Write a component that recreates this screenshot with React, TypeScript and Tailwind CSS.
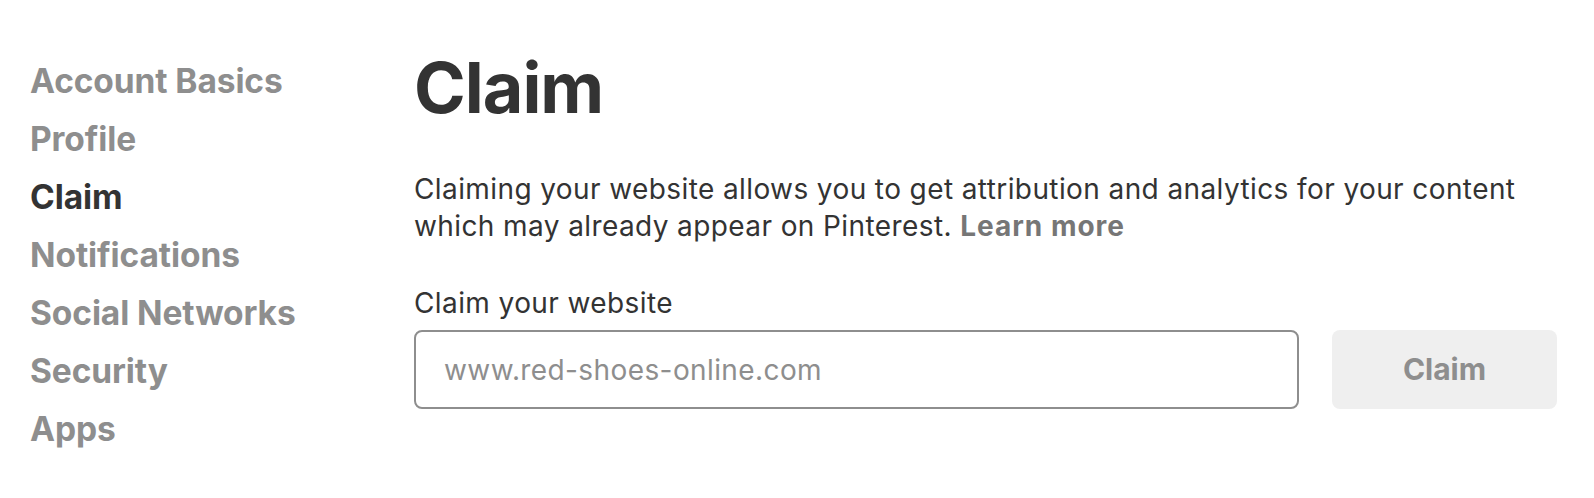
import React from "react"

const navItems = [
  "Account Basics",
  "Profile",
  "Claim",
  "Notifications",
  "Social Networks",
  "Security",
  "Apps",
]

export default function App() {
  return (
    <div className="flex min-h-[498px] w-full bg-white font-['Inter',sans-serif] text-[#333333]">
      {/* Settings nav */}
      <nav className="w-[414px] shrink-0 pl-[30px] pt-[52px]">
        <ul className="flex flex-col">
          {navItems.map((item) => (
            <li
              key={item}
              className={
                "text-[33.5px] font-bold leading-[58px] tracking-[-0.1px] " +
                (item === "Claim" ? "text-[#333333]" : "text-[#8e8e8e]")
              }
            >
              {item}
            </li>
          ))}
        </ul>
      </nav>

      {/* Main panel */}
      <main className="flex-1 pr-[37px] pt-[53px]">
        <h1 className="text-[70px] font-bold leading-[70px] tracking-[-1px]">Claim</h1>

        <p className="mt-[48px] text-[28px] leading-[37px] tracking-[0.4px]">
          Claiming your website allows you to get attribution and analytics for your content
          <br />
          which may already appear on Pinterest.{" "}
          <a className="font-bold tracking-[1px] text-[#767676]">Learn more</a>
        </p>

        <label className="mt-[40px] block text-[28px] leading-[37px] tracking-[0.4px]">
          Claim your website
        </label>

        <div className="mt-[8px] flex gap-[33px]">
          <input
            className="h-[79px] flex-1 rounded-[8px] border-2 border-[#8e8e8e] px-[28px] text-[28px] tracking-[0.4px] outline-none placeholder:text-[#8e8e8e]"
            placeholder="www.red-shoes-online.com"
          />
          <button className="h-[79px] w-[225px] rounded-[8px] bg-[#efefef] text-[30px] font-bold text-[#8e8e8e]">
            Claim
          </button>
        </div>
      </main>
    </div>
  )
}
